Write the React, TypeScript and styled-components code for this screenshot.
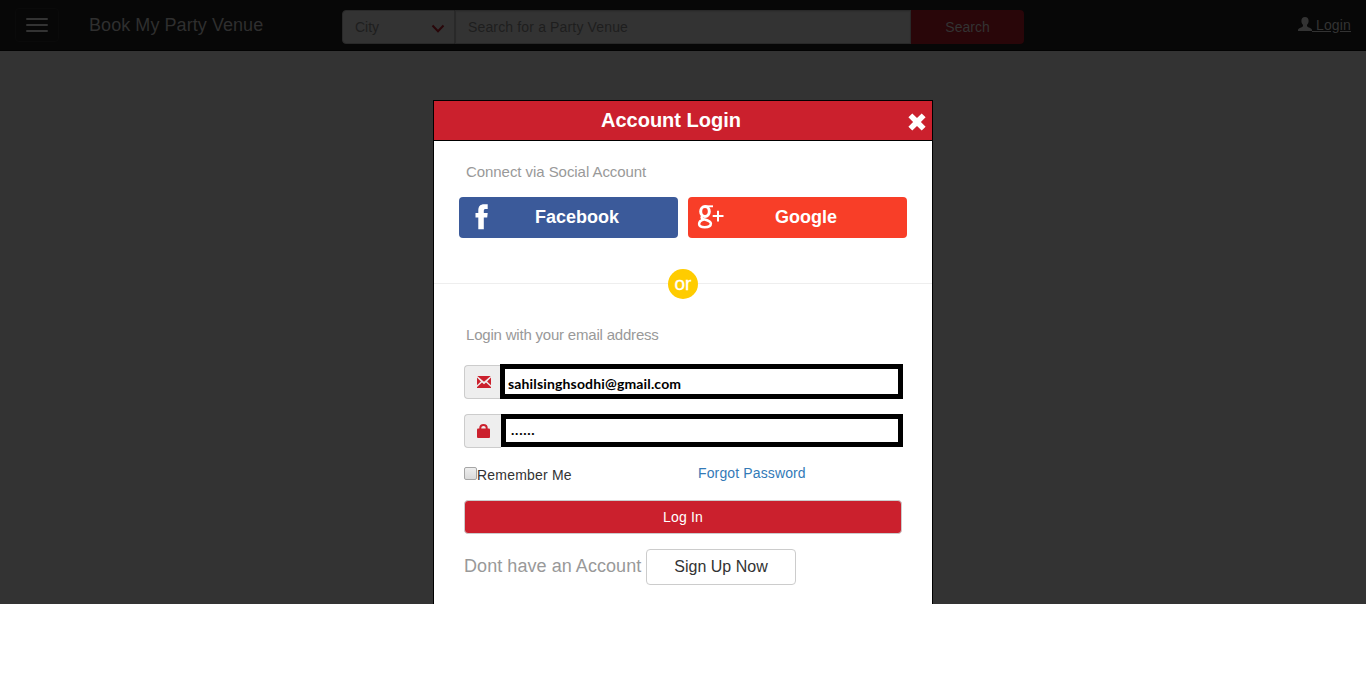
import React from "react";
import styled, { createGlobalStyle } from "styled-components";

const GlobalStyle = createGlobalStyle`
  * { box-sizing: border-box; }
  body { margin: 0; background: #fff; font-family: "Liberation Sans", Arial, sans-serif; font-size: 14px; overflow: hidden; }
  button { font-family: inherit; padding: 0; margin: 0; }
`;

const Page = styled.div`
  height: 604px;
  background: #333;
  display: flex;
  flex-direction: column;
  align-items: center;
  overflow: hidden;
`;

const NavBar = styled.header`
  align-self: stretch;
  flex: none;
  height: 51px;
  background: #070707;
  border-bottom: 1px solid #020202;
  display: flex;
  align-items: flex-start;
  padding: 0 15px;
`;

const MenuButton = styled.button`
  width: 44px;
  height: 34px;
  margin-top: 8px;
  background: transparent;
  border: 1px solid #0a0a0a;
  border-radius: 4px;
  display: flex;
  flex-direction: column;
  align-items: center;
  justify-content: center;
  gap: 4px;
`;

const MenuBar = styled.span`
  width: 22px;
  height: 2px;
  border-radius: 1px;
  background: #333;
`;

const Brand = styled.div`
  width: 253px;
  margin-left: 30px;
  font-size: 18px;
  line-height: 20px;
  letter-spacing: 0.06px;
  padding-top: 15px;
  color: #2f2f2f;
`;

const SearchGroup = styled.div`
  display: flex;
  height: 34px;
  margin-top: 10px;
`;

const CitySelect = styled.div`
  width: 113px;
  background: #333;
  border: 1px solid #292929;
  border-radius: 4px 0 0 4px;
  color: #1e1e1e;
  display: flex;
  align-items: center;
  justify-content: space-between;
  padding: 0 9px 0 12px;
`;

const SearchField = styled.div`
  width: 456px;
  background: #333;
  border: 1px solid #292929;
  box-shadow: inset 0 1px 1px rgba(0, 0, 0, 0.08);
  color: #1e1e1e;
  display: flex;
  align-items: center;
  padding-left: 12px;
  letter-spacing: 0.15px;
`;

const SearchButton = styled.button`
  width: 113px;
  border: 0;
  border-radius: 0 4px 4px 0;
  background: #290609;
  color: #333;
  font-size: 14px;
`;

const LoginLink = styled.a`
  margin-left: auto;
  margin-top: 16px;
  height: 18px;
  line-height: 18px;
  color: #333;
  display: flex;
  white-space: pre;
  text-decoration: underline;
  letter-spacing: 0.15px;
  svg { margin-top: 1px; }
`;

const Modal = styled.section`
  flex: none;
  width: 500px;
  height: 504px;
  margin-top: 49px;
  background: #fff;
  border: 1px solid #000;
  border-bottom: 0;
`;

const ModalHeader = styled.div`
  height: 40px;
  background: #cb202d;
  border-bottom: 1px solid #000;
  display: flex;
  align-items: center;
  padding-right: 6px;
`;

const ModalTitle = styled.h1`
  flex: 1;
  margin: 0;
  text-align: center;
  font-size: 20px;
  line-height: 23px;
  color: #fff;
`;

const CloseButton = styled.button`
  border: 0;
  background: none;
  height: 18px;
  margin-top: 3px;
  display: flex;
`;

const SectionLabel = styled.p<{ $top: number; $spacing: number }>`
  margin: 0;
  padding: ${(p) => p.$top}px 0 0 32px;
  font-size: 15px;
  line-height: 20px;
  letter-spacing: ${(p) => p.$spacing}px;
  color: #999;
`;

const SocialRow = styled.div`
  display: flex;
  gap: 10px;
  padding: 15px 0 0 25px;
`;

const SocialButton = styled.button<{ $color: string; $shift: number }>`
  width: 219px;
  height: 41px;
  border: 0;
  border-radius: 4px;
  background: ${(p) => p.$color};
  color: #fff;
  display: flex;
  align-items: center;
  font-size: 18px;
  font-weight: bold;
  span { flex: 1; text-align: left; padding-left: ${(p) => p.$shift}px; line-height: 20px; padding-bottom: 1px; }
`;

const Divider = styled.div`
  display: flex;
  align-items: center;
  justify-content: center;
  height: 30px;
  margin-top: 31px;
  &::before, &::after { content: ""; flex: 1; height: 1px; margin-bottom: 1px; background: #eee; }
`;

const OrBadge = styled.span`
  width: 30px;
  height: 30px;
  border-radius: 50%;
  background: #fc0;
  color: #fff;
  font-size: 19px;
  line-height: 29px;
  text-align: center;
  -webkit-text-stroke: 0.3px #fff;
`;

const Form = styled.form`
  padding: 19px 29px 0 30px;
`;

const FieldRow = styled.div<{ $gap?: number }>`
  display: flex;
  height: 35px;
  margin-top: ${(p) => p.$gap ?? 0}px;
`;

const Addon = styled.span<{ $width: number; $top: number }>`
  width: ${(p) => p.$width}px;
  height: 34px;
  margin-top: ${(p) => p.$top}px;
  border: 1px solid #ccc;
  border-right: 0;
  border-radius: 4px 0 0 4px;
  background: #eee;
  display: flex;
  align-items: center;
  padding-left: 12px;
`;

const FieldBox = styled.div<{ $height: number; $pad: number }>`
  flex: 1;
  height: ${(p) => p.$height}px;
  border: 5px solid #000;
  background: #fff;
  color: #000;
  padding-left: ${(p) => p.$pad}px;
  font-family: Lato, "Liberation Sans", sans-serif;
  font-weight: 700;
  font-size: 14px;
  line-height: 30px;
  white-space: nowrap;
`;

const EmailText = styled.span`
  letter-spacing: 0.15px;
`;

const Dots = styled.span`
  display: block;
  line-height: 21px;
  letter-spacing: 0.75px;
`;

const OptionsRow = styled.div`
  display: flex;
  align-items: flex-start;
  height: 51px;
  padding-top: 17px;
  line-height: 20px;
  color: #333;
`;

const Remember = styled.label`
  width: 234px;
  display: flex;
  letter-spacing: 0.2px;
`;

const CheckBox = styled.span`
  width: 13px;
  height: 13px;
  margin-top: 1px;
  border: 1px solid #a6a6a6;
  border-radius: 2px;
  background: linear-gradient(#eee, #dadada);
`;

const RememberText = styled.span`
  margin-top: -1px;
`;

const ForgotLink = styled.a`
  color: #337ab7;
  margin-top: -3px;
  letter-spacing: 0.13px;
`;

const SubmitButton = styled.button`
  display: block;
  width: 438px;
  height: 34px;
  border: 1px solid #ccc;
  border-radius: 4px;
  background: #cb202d;
  color: #fff;
  font-size: 14px;
  letter-spacing: 0.15px;
`;

const SignUpRow = styled.div`
  display: flex;
  margin-top: 15px;
  font-size: 18px;
  line-height: 34px;
  color: #999;
`;

const SignUpPrompt = styled.span`
  width: 182px;
  white-space: nowrap;
  letter-spacing: 0.06px;
`;

const SignUpButton = styled.button`
  width: 150px;
  height: 36px;
  border: 1px solid #ccc;
  border-radius: 4px;
  background: #fff;
  color: #333;
  font-size: 16px;
`;

const ChevronIcon = () => (
  <svg width="14" height="10" viewBox="0 0 14 10" style={{ marginTop: 3 }}>
    <path d="M1.5 1.5 7 7.2 12.5 1.5" fill="none" stroke="#290609" strokeWidth="2" />
  </svg>
);

const UserIcon = () => (
  <svg width="14" height="14" viewBox="0 0 14 14" fill="#333">
    <path d="M7 0C4.7 0 3.300 1.500 3.400 3.900c0 1.700.7 3 1.600 3.900v1.500C4.500 10.300 0 11.200 0 13v1h14v-1c0-1.800-4.500-2.700-5-3.700V7.800c.9-.9 1.600-2.200 1.600-3.900C10.700 1.500 9.300 0 7 0z" />
  </svg>
);

const CloseIcon = () => (
  <svg width="18" height="18" viewBox="0 0 18 18">
    <path d="M4.300.4 9 5.100 13.700.4 17.600 4.300 12.900 9l4.700 4.700-3.900 3.900L9 12.900l-4.700 4.700L.4 13.700 5.100 9 .4 4.300z" fill="#fff" />
  </svg>
);

const FacebookIcon = () => (
  <svg width="38" height="41" viewBox="0 0 38 41">
    <path d="M19.300 32.300V20.500h-2.800v-4.600h2.800v-2.500C19.300 9.300 21.500 7.300 25 7.300h3.700v4.800h-2c-1.300 0-1.900.6-1.900 1.900v1.900h3.900l-.5 4.600h-3.400v11.800z" fill="#fff" />
  </svg>
);

const GoogleIcon = () => (
  <svg width="38" height="41" viewBox="0 0 38 41" fill="none" stroke="#fff">
    <ellipse cx="17" cy="14.500" rx="4.300" ry="4.900" strokeWidth="3" />
    <path d="M17 9.300h8" strokeWidth="1.900" />
    <path d="M14.800 18.700c-2 1.500-1.500 2.900.8 3.500 3 .8 7.300 1.500 7.300 4.400 0 2.600-2.700 3.700-6.200 3.700-3.700 0-5.600-1.200-5.600-3.400 0-2.300 2-3.700 4.800-4.400" strokeWidth="2.500" />
    <path d="M24.700 19h10.800M30 13.800v10.700" strokeWidth="2" />
  </svg>
);

const MailIcon = () => (
  <svg width="14" height="12" viewBox="0 0 14 12" fill="#cb202d">
    <path d="M.3 0h13.400L7 5.800zM0 1.400 3.900 5.500 0 9.300zM14 1.400 10.100 5.500 14 9.300zM0 12v-1l5-4.500 2 1.800 2-1.800 5 4.500v1z" />
  </svg>
);

const LockIcon = () => (
  <svg width="13" height="14" viewBox="0 0 13 14">
    <path d="M3.300 6V3.800Q3.300 1 6.500 1T9.700 3.800V6" fill="none" stroke="#cb202d" strokeWidth="2" />
    <rect y="4.500" width="13" height="9.500" rx="1" fill="#cb202d" />
  </svg>
);

export default function App() {
  return (
    <>
      <GlobalStyle />
      <Page>
        <NavBar>
          <MenuButton type="button" aria-label="Menu">
            <MenuBar />
            <MenuBar />
            <MenuBar />
          </MenuButton>
          <Brand>Book My Party Venue</Brand>
          <SearchGroup>
            <CitySelect>
              City
              <ChevronIcon />
            </CitySelect>
            <SearchField>Search for a Party Venue</SearchField>
            <SearchButton type="button">Search</SearchButton>
          </SearchGroup>
          <LoginLink>
            <UserIcon />
            <span> Login</span>
          </LoginLink>
        </NavBar>
        <Modal>
          <ModalHeader>
            <ModalTitle>Account Login</ModalTitle>
            <CloseButton type="button" aria-label="Close">
              <CloseIcon />
            </CloseButton>
          </ModalHeader>
          <SectionLabel $top={21} $spacing={-0.06}>Connect via Social Account</SectionLabel>
          <SocialRow>
            <SocialButton type="button" $color="#3b5a9a" $shift={38}>
              <FacebookIcon />
              <span>Facebook</span>
            </SocialButton>
            <SocialButton type="button" $color="#f83e28" $shift={49}>
              <GoogleIcon />
              <span>Google</span>
            </SocialButton>
          </SocialRow>
          <Divider>
            <OrBadge>or</OrBadge>
          </Divider>
          <SectionLabel $top={26} $spacing={-0.2}>Login with your email address</SectionLabel>
          <Form>
            <FieldRow>
              <Addon $width={36} $top={1}>
                <MailIcon />
              </Addon>
              <FieldBox $height={35} $pad={3}>
                <EmailText>sahilsinghsodhi@gmail.com</EmailText>
              </FieldBox>
            </FieldRow>
            <FieldRow $gap={15}>
              <Addon $width={37} $top={0}>
                <LockIcon />
              </Addon>
              <FieldBox $height={33} $pad={5}>
                <Dots>......</Dots>
              </FieldBox>
            </FieldRow>
            <OptionsRow>
              <Remember>
                <CheckBox />
                <RememberText>Remember Me</RememberText>
              </Remember>
              <ForgotLink>Forgot Password</ForgotLink>
            </OptionsRow>
            <SubmitButton type="button">Log In</SubmitButton>
            <SignUpRow>
              <SignUpPrompt>Dont have an Account</SignUpPrompt>
              <SignUpButton type="button">Sign Up Now</SignUpButton>
            </SignUpRow>
          </Form>
        </Modal>
      </Page>
    </>
  );
}
